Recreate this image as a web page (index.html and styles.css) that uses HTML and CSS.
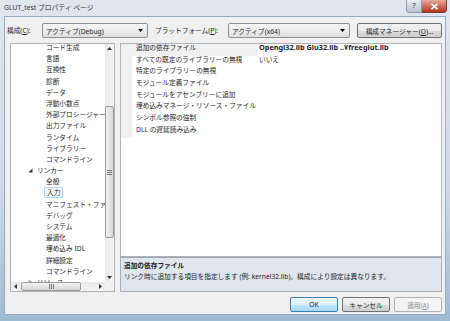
FILE: index.html
```html
<!DOCTYPE html>
<html>
<head>
    <title>GLUT_test プロパティ ページ</title>
    <link rel="stylesheet" href="styles.css">
</head>
<body>
    <div class="window">
        <div class="titlebar">
            <span class="title">GLUT_test プロパティ ページ</span>
            <div class="caption">
                <span class="cap-help">?</span>
                <span class="cap-close">
                    <svg width="9" height="7" viewBox="0 0 9 7"><path d="M1.5 0.8 L7.5 6.2 M7.5 0.8 L1.5 6.2" stroke="#fff" stroke-width="1.6"/></svg>
                </span>
            </div>
        </div>

        <div class="client">
            <div class="toolbar">
                <label class="lbl lbl-config">構成(<u>C</u>):</label>
                <div class="combo combo-config">
                    <span>アクティブ(Debug)</span>
                    <svg width="5" height="3" viewBox="0 0 5 3"><path d="M0 0 H5 L2.5 3 Z" fill="#000"/></svg>
                </div>
                <label class="lbl lbl-platform">プラットフォーム(<u>P</u>):</label>
                <div class="combo combo-platform">
                    <span>アクティブ(x64)</span>
                    <svg width="5" height="3" viewBox="0 0 5 3"><path d="M0 0 H5 L2.5 3 Z" fill="#000"/></svg>
                </div>
                <button class="btn btn-manager">構成マネージャー(<u>O</u>)...</button>
            </div>

            <div class="main">
                <div class="tree">
                    <div class="tree-view">
                        <ul class="tree-list">
                            <li class="child">コード生成</li>
                            <li class="child">言語</li>
                            <li class="child">互換性</li>
                            <li class="child">診断</li>
                            <li class="child">データ</li>
                            <li class="child">浮動小数点</li>
                            <li class="child">外部プロシージャー</li>
                            <li class="child">出力ファイル</li>
                            <li class="child">ランタイム</li>
                            <li class="child">ライブラリー</li>
                            <li class="child">コマンドライン</li>
                            <li class="parent"><svg class="twisty" width="5" height="5" viewBox="0 0 5 5"><path d="M4.5 0.5 V4.5 H0.5 Z" fill="#333"/></svg>リンカー</li>
                            <li class="child">全般</li>
                            <li class="child"><span class="selected">入力</span></li>
                            <li class="child">マニフェスト・ファイル</li>
                            <li class="child">デバッグ</li>
                            <li class="child">システム</li>
                            <li class="child">最適化</li>
                            <li class="child">埋め込み IDL</li>
                            <li class="child">詳細設定</li>
                            <li class="child">コマンドライン</li>
                            <li class="parent"><svg class="twisty" width="5" height="5" viewBox="0 0 5 5"><path d="M1 0.5 L4 2.5 L1 4.5 Z" fill="none" stroke="#777" stroke-width="0.8"/></svg>リソース</li>
                        </ul>
                    </div>
                    <div class="vscroll">
                        <div class="arrow"><svg width="5" height="3" viewBox="0 0 5 3"><path d="M0 3 H5 L2.5 0 Z" fill="#333"/></svg></div>
                        <div class="vtrack">
                            <div class="vthumb"><span class="grip-v"></span></div>
                        </div>
                        <div class="arrow"><svg width="5" height="3" viewBox="0 0 5 3"><path d="M0 0 H5 L2.5 3 Z" fill="#333"/></svg></div>
                    </div>
                    <div class="hscroll">
                        <div class="arrow"><svg width="3" height="5" viewBox="0 0 3 5"><path d="M3 0 V5 L0 2.5 Z" fill="#333"/></svg></div>
                        <div class="htrack">
                            <div class="hthumb"><span class="grip-h"></span></div>
                        </div>
                        <div class="arrow"><svg width="3" height="5" viewBox="0 0 3 5"><path d="M0 0 V5 L3 2.5 Z" fill="#333"/></svg></div>
                    </div>
                    <div class="corner"></div>
                </div>

                <div class="props">
                    <div class="grid">
                        <div class="row active">
                            <span class="margin"></span>
                            <span class="name">追加の依存ファイル</span>
                            <span class="value latin bold">Opengl32.lib Glu32.lib ..¥freeglut.lib</span>
                        </div>
                        <div class="row">
                            <span class="margin"></span>
                            <span class="name">すべての既定のライブラリーの無視</span>
                            <span class="value">いいえ</span>
                        </div>
                        <div class="row">
                            <span class="margin"></span>
                            <span class="name">特定のライブラリーの無視</span>
                            <span class="value"></span>
                        </div>
                        <div class="row">
                            <span class="margin"></span>
                            <span class="name">モジュール定義ファイル</span>
                            <span class="value"></span>
                        </div>
                        <div class="row">
                            <span class="margin"></span>
                            <span class="name">モジュールをアセンブリーに追加</span>
                            <span class="value"></span>
                        </div>
                        <div class="row">
                            <span class="margin"></span>
                            <span class="name">埋め込みマネージ・リソース・ファイル</span>
                            <span class="value"></span>
                        </div>
                        <div class="row">
                            <span class="margin"></span>
                            <span class="name">シンボル参照の強制</span>
                            <span class="value"></span>
                        </div>
                        <div class="row">
                            <span class="margin"></span>
                            <span class="name">DLL の遅延読み込み</span>
                            <span class="value"></span>
                        </div>
                    </div>
                    <div class="desc">
                        <div class="desc-title">追加の依存ファイル</div>
                        <div class="desc-text">リンク時に追加する項目を指定します (例: kernel32.lib)。構成により設定は異なります。</div>
                    </div>
                </div>
            </div>

            <div class="footer">
                <button class="btn btn-ok">OK</button>
                <button class="btn btn-cancel">キャンセル</button>
                <button class="btn btn-apply" disabled>適用(<u>A</u>)</button>
            </div>
        </div>
    </div>
</body>
</html>
```

FILE: styles.css
```css
* {
    box-sizing: border-box;
}

body {
    margin: 0;
    width: 450px;
    height: 321px;
    overflow: hidden;
    font-family: "Noto Sans", "Noto Sans CJK JP", sans-serif;
    font-size: 6.7px;
    color: #1e1e1e;
}

u {
    text-decoration: underline;
}

.window {
    width: 450px;
    height: 321px;
    display: flex;
    flex-direction: column;
    background: linear-gradient(#dfe6ee, #cfd9e4 60%, #9fbad4);
}

/* title bar */
.titlebar {
    height: 16px;
    flex: 0 0 16px;
    display: flex;
    justify-content: space-between;
    align-items: flex-start;
    padding-left: 4px;
}

.title {
    line-height: 15px;
    font-size: 6.8px;
    color: #333;
}

.caption {
    display: flex;
    margin-right: 3px;
}

.cap-help {
    width: 16px;
    height: 13px;
    border: 1px solid #8e99a6;
    border-top: none;
    border-radius: 0 0 0 4px;
    background: linear-gradient(#e9eef3, #cdd6e0 50%, #bcc8d6);
    color: #58677a;
    font-size: 7px;
    font-weight: bold;
    text-align: center;
    line-height: 12px;
}

.cap-close {
    width: 25px;
    height: 13px;
    border: 1px solid #7a3a30;
    border-top: none;
    border-left: none;
    border-radius: 0 0 4px 0;
    background: linear-gradient(#e9a99b, #d0705c 50%, #b8361e);
    display: flex;
    align-items: center;
    justify-content: center;
}

/* client area */
.client {
    flex: 1;
    min-height: 0;
    margin: 0 4px 6px 4px;
    background: #f0f0f0;
    border: 1px solid #9aaabd;
    padding: 6px 3px 0 2px;
    display: flex;
    flex-direction: column;
}

.toolbar {
    flex: 0 0 15px;
    display: flex;
    align-items: center;
}

.lbl {
    line-height: 15px;
    white-space: nowrap;
}

.lbl-config {
    width: 35px;
}

.lbl-platform {
    width: 73px;
    margin-left: 7px;
}

.combo {
    height: 15px;
    border: 1px solid #8e8f8f;
    border-radius: 2px;
    background: linear-gradient(#f6f6f6, #ececec 50%, #dedede);
    display: flex;
    align-items: center;
    justify-content: space-between;
    padding: 0 4px 0 3px;
}

.combo-config {
    width: 106px;
}

.combo-platform {
    width: 122px;
}

.btn {
    font-family: inherit;
    font-size: 6.7px;
    color: #1e1e1e;
    height: 15px;
    padding: 0;
    border: 1px solid #707070;
    border-radius: 2px;
    background: linear-gradient(#f2f2f2, #ebebeb 50%, #dddddd 51%, #cfcfcf);
}

.btn-manager {
    width: 85px;
    margin-left: 7px;
}

/* main split */
.main {
    flex: 0 0 249px;
    min-height: 0;
    display: flex;
    gap: 5px;
    margin: 5px 0 0 3px;
}

.tree {
    width: 105px;
    min-height: 0;
    border: 1px solid #aeb2b8;
    background: #fff;
    display: grid;
    grid-template-columns: minmax(0, 1fr) 9px;
    grid-template-rows: minmax(0, 1fr) 9px;
}

.tree-view {
    overflow: hidden;
    min-height: 0;
}

.tree-list {
    list-style: none;
    margin: 0;
    padding: 0;
}

.tree-list li {
    height: 11.2px;
    line-height: 7px;
    white-space: nowrap;
}

.tree-list .child {
    padding-left: 35px;
}

.tree-list .parent {
    padding-left: 17px;
    display: flex;
    align-items: flex-start;
}

.twisty {
    margin: 1px 4px 0 0;
}

.selected {
    display: inline-block;
    margin: -2px 0 0 -2px;
    padding: 0 2px;
    line-height: 9px;
    border: 1px solid #a8d8f8;
    border-radius: 1px;
    background: #f4fafe;
}

/* scrollbars */
.vscroll {
    background: linear-gradient(90deg, #e8e8e8, #f4f4f4);
    display: flex;
    flex-direction: column;
    min-height: 0;
}

.hscroll {
    background: linear-gradient(#e8e8e8, #f4f4f4);
    display: flex;
}

.arrow {
    flex: 0 0 9px;
    height: 9px;
    display: flex;
    align-items: center;
    justify-content: center;
}

.vtrack {
    flex: 1;
    padding-top: 53px;
    padding-bottom: 35px;
}

.vthumb {
    height: 100%;
    border: 1px solid #9b9b9b;
    border-radius: 2px;
    background: linear-gradient(90deg, #f3f3f3, #e4e4e4 50%, #d6d6d6);
    display: flex;
    align-items: center;
    justify-content: center;
}

.htrack {
    flex: 1;
    padding-left: 1px;
    padding-right: 15px;
}

.hthumb {
    height: 100%;
    border: 1px solid #9b9b9b;
    border-radius: 2px;
    background: linear-gradient(#f3f3f3, #e4e4e4 50%, #d6d6d6);
    display: flex;
    align-items: center;
    justify-content: center;
}

.grip-v {
    width: 5px;
    height: 5px;
    background: repeating-linear-gradient(#777 0 1px, transparent 1px 2px);
}

.grip-h {
    width: 5px;
    height: 5px;
    background: repeating-linear-gradient(90deg, #777 0 1px, transparent 1px 2px);
}

.corner {
    background: #f0f0f0;
}

/* property grid */
.props {
    flex: 1;
    display: flex;
    flex-direction: column;
}

.grid {
    flex: 1;
    border: 1px solid #aeb2b8;
    background: #fff;
    overflow: hidden;
}

.row {
    height: 11.7px;
    line-height: 7.4px;
    display: flex;
    white-space: nowrap;
}

.margin {
    width: 11px;
    background: #f0f0f0;
}

.name {
    width: 125px;
    padding-left: 4px;
}

.row.active .name {
    background: #f0f0f0;
}

.value {
    flex: 1;
    padding-left: 2px;
}

.latin {
    font-size: 7.3px;
}

.bold {
    font-weight: bold;
}

.desc {
    flex: 0 0 35px;
    border: 1px solid #a5adb8;
    border-top: 1px solid #9aa3ae;
    background: #dfe5ed;
    padding: 2px 3px;
}

.desc-title {
    font-weight: bold;
    line-height: 11px;
}

.desc-text {
    line-height: 11px;
}

/* dialog buttons */
.footer {
    display: flex;
    justify-content: flex-end;
    gap: 4px;
    margin-top: 5px;
}

.btn-ok,
.btn-cancel,
.btn-apply {
    width: 48px;
}

.btn-ok {
    border-color: #3c7fb1;
    background: linear-gradient(#eaf6fd, #d9f0fc 50%, #bee6fd 51%, #a7d9f5);
}

.btn-apply {
    border-color: #adb2b5;
    background: #f4f4f4;
    color: #8a8a8a;
}
```
